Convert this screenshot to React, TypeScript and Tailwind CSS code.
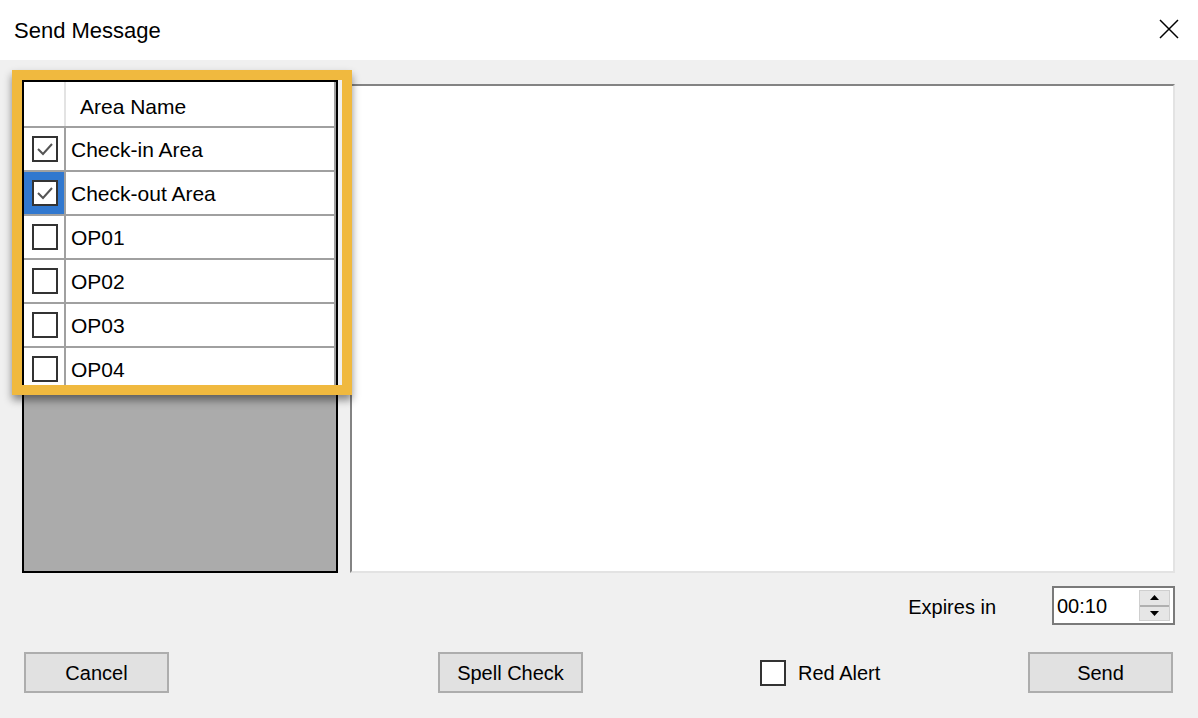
import React from 'react';

const font = { fontFamily: '"Liberation Sans", Arial, sans-serif' };

interface AreaRow {
  name: string;
  checked: boolean;
  selected?: boolean;
}

const rows: AreaRow[] = [
  { name: 'Check-in Area', checked: true },
  { name: 'Check-out Area', checked: true, selected: true },
  { name: 'OP01', checked: false },
  { name: 'OP02', checked: false },
  { name: 'OP03', checked: false },
  { name: 'OP04', checked: false },
];

function CheckBox({ checked }: { checked: boolean }) {
  return (
    <div className="w-[26px] h-[26px] border-2 border-[#333333] bg-white flex items-center justify-center">
      {checked && (
        <svg width="22" height="22" viewBox="0 0 22 22">
          <polyline points="4,11 9,16 18,6" fill="none" stroke="#555555" strokeWidth="2" />
        </svg>
      )}
    </div>
  );
}

function WinButton({ label, className = '' }: { label: string; className?: string }) {
  return (
    <button className={`w-[145px] h-[41px] border-2 border-[#adadad] bg-[#e1e1e1] text-[20px] text-black flex items-center justify-center ${className}`}>
      {label}
    </button>
  );
}

export default function App() {
  return (
    <div className="w-[1198px] h-[718px] bg-[#f0f0f0] relative overflow-hidden text-black" style={font}>
      {/* Title bar */}
      <div className="h-[60px] bg-white flex items-center justify-between pl-[14px] pr-[18px]">
        <span className="text-[22px]">Send Message</span>
        <svg width="22" height="22" viewBox="0 0 22 22" className="mb-[2px]">
          <path d="M2 2 L20 20 M20 2 L2 20" stroke="#000" strokeWidth="1.5" />
        </svg>
      </div>

      <div className="pl-[22px] pr-[23px] pt-[20px] flex flex-col">
        {/* Main area */}
        <div className="flex gap-[12px] h-[493px]">
          <div className="w-[316px] border-2 border-black bg-[#ababab] flex flex-col overflow-hidden">
            <div className="h-[46px] bg-white flex border-b-2 border-[#a0a0a0] border-r-2 border-r-[#a0a0a0]">
              <div className="w-[42px] border-r-2 border-[#e3e3e3]" />
              <div className="flex items-center pl-[14px] pt-[5px] text-[21px]">Area Name</div>
            </div>
            {rows.map((r) => (
              <div key={r.name} className="h-[44px] shrink-0 bg-white flex border-b-2 border-[#a0a0a0] border-r-2 border-r-[#a0a0a0]">
                <div className={`w-[42px] border-r-2 border-[#a0a0a0] flex items-center justify-center pl-[2px] ${r.selected ? 'bg-[#3178cf]' : ''}`}>
                  <CheckBox checked={r.checked} />
                </div>
                <div className="flex items-center pl-[5px] pt-[1px] text-[21px]">{r.name}</div>
              </div>
            ))}
          </div>
          <div className="flex-1 mt-[4px] bg-white border-2 border-t-[#838383] border-l-[#838383] border-r-[#e3e3e3] border-b-[#e3e3e3]" />
        </div>

        {/* Expires */}
        <div className="flex justify-end items-center mt-[13px]">
          <span className="text-[20px] mr-[56px] pt-[2px]">Expires in</span>
          <div className="w-[123px] h-[39px] border-2 border-[#7a7a7a] bg-white flex items-center pl-[3px] pr-[3px]">
            <span className="text-[20px] flex-1">00:10</span>
            <div className="w-[31px] h-[31px] bg-[#e6e6e6] border border-[#cfcfcf] flex flex-col">
              <div className="flex-1 flex items-center justify-center border-b-2 border-[#b0b0b0]">
                <svg width="9" height="5" viewBox="0 0 9 5"><polygon points="0,5 9,5 4.5,0" fill="#000" /></svg>
              </div>
              <div className="flex-1 flex items-center justify-center">
                <svg width="9" height="5" viewBox="0 0 9 5"><polygon points="0,0 9,0 4.5,5" fill="#000" /></svg>
              </div>
            </div>
          </div>
        </div>

        {/* Buttons */}
        <div className="flex items-center mt-[27px] pl-[2px]">
          <WinButton label="Cancel" />
          <WinButton label="Spell Check" className="ml-[269px]" />
          <div className="w-[124px] flex items-center ml-[177px]">
            <div className="w-[26px] h-[26px] border-2 border-[#333333] bg-white" />
            <span className="text-[20px] ml-[12px]">Red Alert</span>
          </div>
          <WinButton label="Send" className="ml-[144px]" />
        </div>
      </div>

      {/* Highlight frame over the area list */}
      <div className="absolute left-[12px] top-[70px] w-[340px] h-[325px] border-[10px] border-[#f0b93f] shadow-[0_5px_8px_rgba(0,0,0,0.45)] pointer-events-none" />
    </div>
  );
}
